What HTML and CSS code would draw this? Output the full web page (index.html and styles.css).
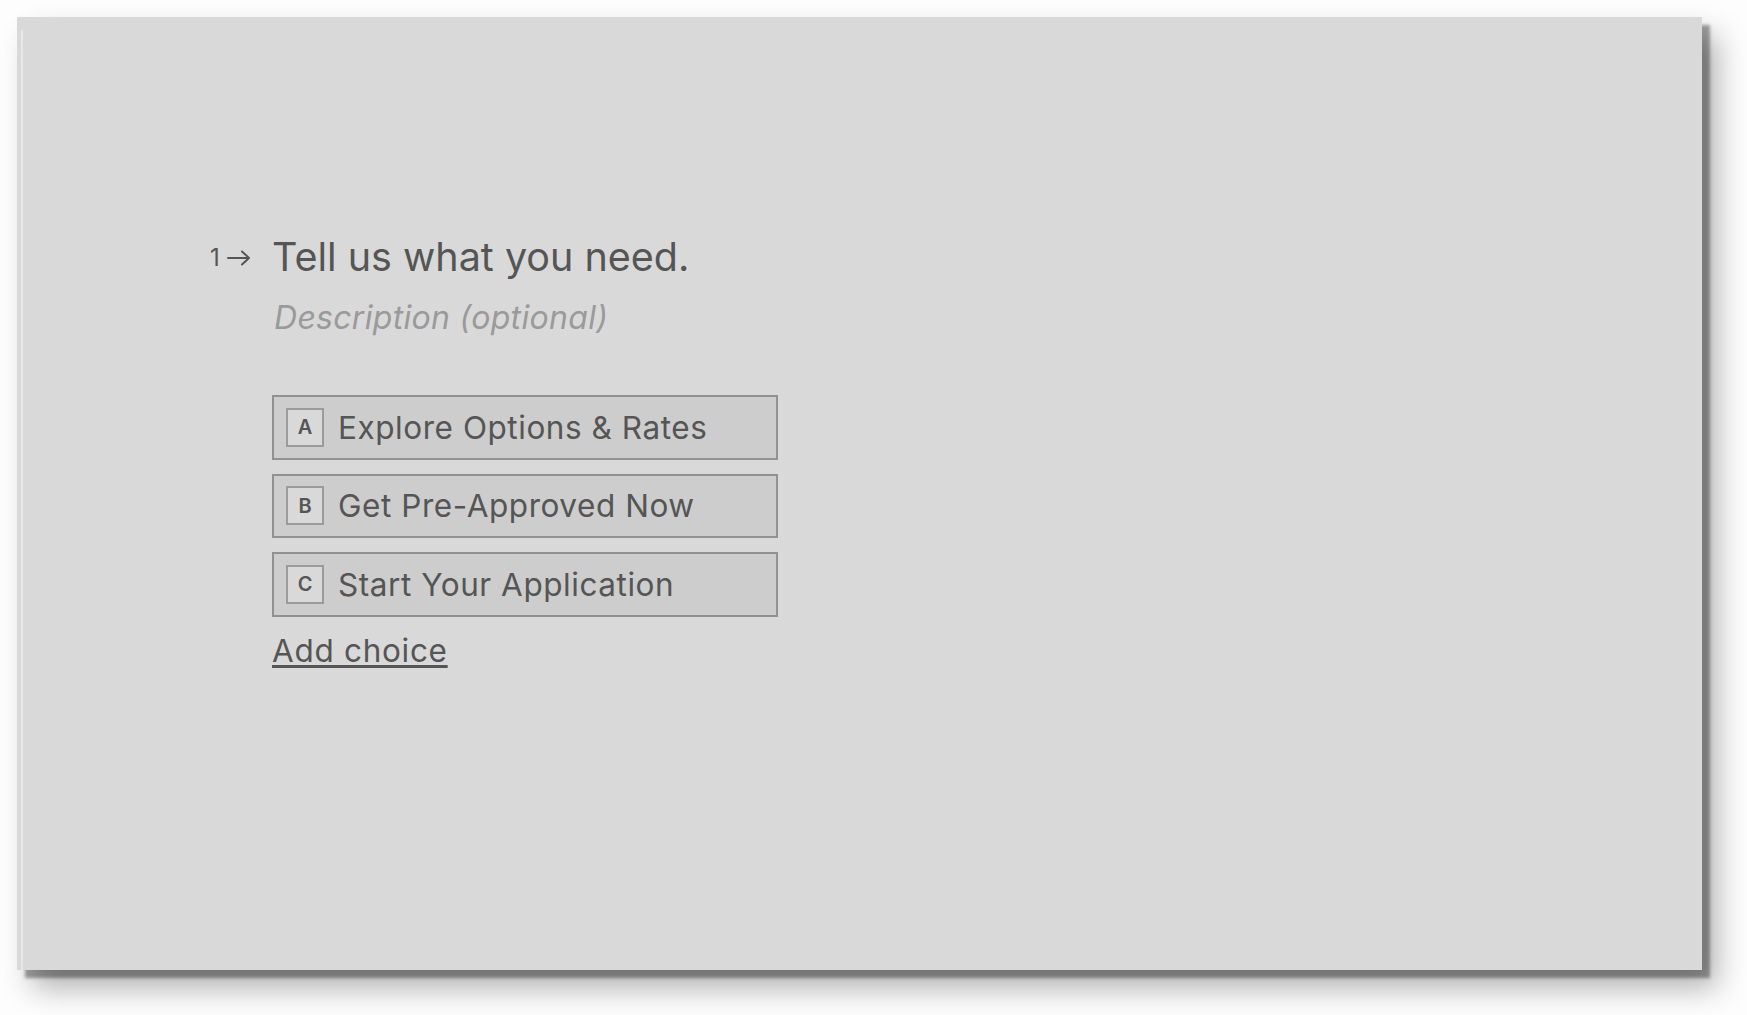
FILE: index.html
```html
<!doctype html>
<html lang="en">
<head>
	<meta charset="utf-8">
	<title>Question editor</title>
	<link rel="stylesheet" href="styles.css">
</head>
<body>
	<div class="card">
		<div class="question">
			<div class="number">
				<span>1</span>
				<svg class="arrow" width="24" height="16" viewBox="0 0 24 16">
					<path d="M1 8 H22 M15 1.5 L22 8 L15 14.5" fill="none" stroke="#555" stroke-width="2" stroke-linecap="round" stroke-linejoin="round"/>
				</svg>
			</div>
			<div class="body">
				<h1 class="title">Tell us what you need.</h1>
				<p class="description">Description (optional)</p>

				<ul class="choices">
					<li class="choice"><span class="key">A</span>Explore Options &amp; Rates</li>
					<li class="choice"><span class="key">B</span>Get Pre-Approved Now</li>
					<li class="choice"><span class="key">C</span>Start Your Application</li>
				</ul>
				<a class="add" href="#">Add choice</a>
			</div>
		</div>
	</div>
</body>
</html>
```

FILE: styles.css
```css
html, body {
	margin: 0;
	background: #fdfdfd;
}
body {
	box-sizing: border-box;
	min-height: 100vh;
	padding: 17px;
	font-family: Inter, "Noto Sans", sans-serif;
	color: #555;
}
.card {
	position: relative;
	box-sizing: border-box;
	width: 1685px;
	height: 953px;
	background: #d9d9d9;
	padding: 216px 0 0 193px;
	box-shadow: 8px 8px 3px rgba(0, 0, 0, 0.36), 15px 18px 28px rgba(0, 0, 0, 0.3);
}
/* thin light strip along the left edge */
.card::before {
	content: "";
	position: absolute;
	left: 4px;
	top: 13px;
	bottom: 0;
	width: 2px;
	background: #e8e8e8;
}
.question {
	display: flex;
}
.number {
	display: flex;
	align-items: center;
	width: 62px;
	height: 26px;
	margin-top: 12px;
	font-size: 24px;
	line-height: 26px;
}
.number span {
	width: 17px;
}
.title {
	margin: 0;
	font-size: 39.5px;
	font-weight: 400;
	line-height: 48px;
	color: #555;
}
.description {
	margin: 17px 0 0 2px;
	font-size: 32px;
	font-style: italic;
	letter-spacing: 0.3px;
	line-height: 40px;
	color: #9a9a9a;
}
.choices {
	list-style: none;
	margin: 57px 0 0;
	padding: 0;
	display: flex;
	flex-direction: column;
	gap: 14px;
}
.choice {
	box-sizing: border-box;
	display: flex;
	align-items: center;
	gap: 14px;
	width: 506px;
	height: 64.5px;
	padding: 0 12px;
	border: 2px solid #919191;
	background: #cdcdcd;
	font-size: 31.5px;
	letter-spacing: 0.55px;
}
.key {
	box-sizing: border-box;
	display: flex;
	align-items: center;
	justify-content: center;
	width: 38px;
	height: 39px;
	border: 2px solid #9b9b9b;
	background: #d9d9d9;
	font-size: 20px;
	font-weight: 600;
	letter-spacing: 0;
}
.add {
	display: inline-block;
	margin-top: 14px;
	font-size: 31.5px;
	letter-spacing: 0.7px;
	line-height: 40px;
	color: #555;
	text-decoration-thickness: 3px;
	text-underline-offset: 3px;
}
```
